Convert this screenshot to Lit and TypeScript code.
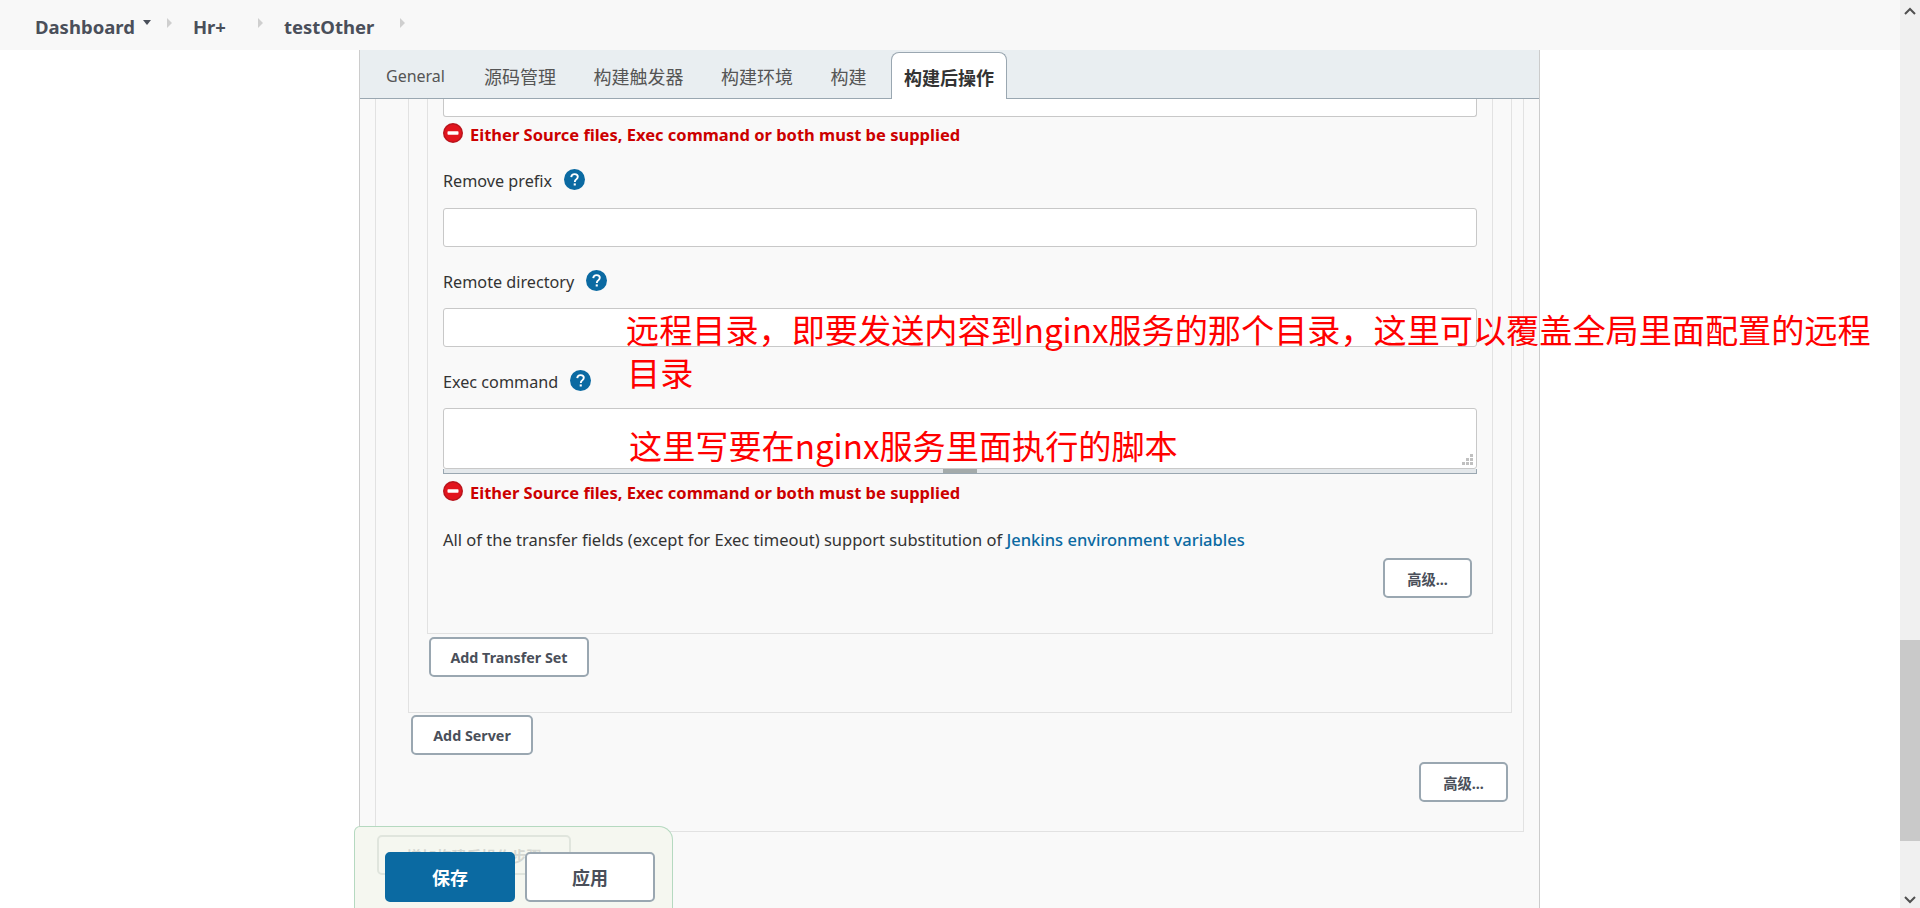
import { LitElement, html, css } from 'lit';
import { customElement } from 'lit/decorators.js';

const ERROR_TEXT = 'Either Source files, Exec command or both must be supplied';

@customElement('app-root')
export class AppRoot extends LitElement {
  static styles = css`
    :host {
      display: block;
      position: relative;
      width: 1920px;
      height: 908px;
      overflow: hidden;
      background: #fff;
      color: #333;
      font-family: "Noto Sans", "Open Sans", "Noto Sans CJK SC", sans-serif;
      font-size: 16.2px;
    }
    .page {
      display: flex;
      height: 908px;
    }
    .main {
      width: 1900px;
      flex: none;
    }
    .scrollbar {
      position: relative;
      width: 20px;
      background: #f0f0f0;
      display: flex;
      flex-direction: column;
      padding-top: 640px;
      box-sizing: border-box;
    }
    .thumb {
      height: 201px;
      background: #c9c9c9;
    }
    .arrow {
      position: absolute;
      left: 0;
    }
    .arrow.up {
      top: 4px;
    }
    .arrow.down {
      bottom: 0;
    }
    .crumbs {
      height: 50px;
      box-sizing: border-box;
      background: #f8f8f8;
      display: flex;
      align-items: center;
      padding: 3px 0 0 35px;
      color: #4a4f5a;
      font-weight: 700;
      font-size: 18.5px;
    }
    .crumb-caret {
      width: 0;
      height: 0;
      margin: 0 0 8px 8px;
      border: 4px solid transparent;
      border-top: 5px solid #4a4f5a;
      border-bottom: 0;
    }
    .crumb-sep {
      width: 0;
      height: 0;
      border: 5px solid transparent;
      border-left: 5px solid #cfcfcf;
      border-right: 0;
      margin-bottom: 8px;
    }
    .sep-1 { margin-left: 16px; }
    .sep-2 { margin-left: 32px; }
    .sep-3 { margin-left: 26px; }
    .crumb-hr { margin-left: 21px; }
    .crumb-job { margin-left: 21px; }
    .panel {
      margin-left: 359px;
      width: 1179px;
      height: 858px;
      border-left: 1px solid #ccc;
      border-right: 1px solid #ccc;
      background: #f9f9f9;
    }
    .tabs {
      height: 49px;
      box-sizing: border-box;
      display: flex;
      align-items: flex-end;
      background: #e9eef1;
      border-bottom: 1px solid #9aa7b1;
      padding-left: 13px;
    }
    .tab {
      height: 46px;
      box-sizing: border-box;
      padding: 2px 13px 0;
      margin-right: 11.5px;
      display: flex;
      align-items: center;
      color: #555;
      font-size: 18px;
    }
    .tab.latin {
      font-size: 16px;
      margin-right: 13px;
    }
    .tab.active {
      height: 47px;
      margin-bottom: -1px;
      background: #fff;
      border: 1px solid #9aa7b1;
      border-bottom: none;
      border-radius: 8px 8px 0 0;
      padding: 2px 12px 0;
      color: #333;
      font-weight: 700;
    }
    .outer {
      margin-left: 15px;
      width: 1149px;
      box-sizing: border-box;
      height: 733px;
      border: 1px solid #e2e2e2;
      border-top: none;
      padding-left: 32px;
      display: flex;
      flex-direction: column;
    }
    .middle {
      width: 1104px;
      height: 614px;
      flex: none;
      box-sizing: border-box;
      border: 1px solid #e2e2e2;
      border-top: none;
      padding-left: 18px;
    }
    .inner {
      width: 1066px;
      height: 535px;
      box-sizing: border-box;
      border: 1px solid #e2e2e2;
      border-top: none;
      padding: 0 15px;
      display: flex;
      flex-direction: column;
    }
    .input {
      height: 39px;
      margin-top: 15px;
      box-sizing: border-box;
      background: #fff;
      border: 1px solid #c8c8c8;
      border-radius: 3px;
      flex: none;
    }
    .input.stub {
      height: 18px;
      margin-top: 0;
      border-top: none;
      border-radius: 0 0 3px 3px;
    }
    .input.first {
      margin-top: 16px;
    }
    .error {
      display: flex;
      align-items: center;
      gap: 7px;
      height: 20px;
      margin-top: 8px;
      color: #cc0000;
      font-weight: 700;
      font-size: 16.5px;
    }
    .error.first {
      margin-top: 7px;
    }
    .error svg {
      margin-top: -2px;
    }
    .label {
      display: flex;
      align-items: center;
      gap: 11.5px;
      height: 22px;
      line-height: 22px;
      margin-top: 24px;
    }
    .label.first {
      margin-top: 26px;
    }
    .label svg {
      margin-top: -4px;
    }
    .textarea {
      position: relative;
      height: 61px;
      margin-top: 15px;
      box-sizing: border-box;
      background: #fff;
      border: 1px solid #c8c8c8;
      border-radius: 3px;
      flex: none;
    }
    .grip {
      position: absolute;
      right: 3px;
      bottom: 3px;
    }
    .drag {
      height: 5px;
      box-sizing: border-box;
      background: #e4e8eb;
      border: 1px solid #9aa7b1;
      border-width: 0 1px 1px;
      display: flex;
      justify-content: center;
      flex: none;
    }
    .drag i {
      display: block;
      width: 34px;
      height: 4px;
      background: #a3aaaa;
    }
    .note {
      height: 22px;
      line-height: 22px;
      margin-top: 27px;
      font-size: 16.5px;
      white-space: nowrap;
    }
    .note a {
      color: #0b6aa2;
      font-weight: 500;
      text-decoration: none;
    }
    .btn {
      box-sizing: border-box;
      height: 40px;
      display: flex;
      align-items: center;
      justify-content: center;
      background: #fff;
      border: 2px solid #9aa7b1;
      border-radius: 5px;
      color: #4a4f5a;
      font-weight: 700;
      font-size: 14.3px;
      flex: none;
    }
    .adv {
      width: 89px;
    }
    .adv.in-form {
      align-self: flex-end;
      margin: 7px 5px 0 0;
    }
    .add-set {
      width: 160px;
      margin: 3px 0 0 2px;
    }
    .add-server {
      width: 122px;
      margin: 2px 0 0 3px;
    }
    .adv.outer-adv {
      margin: 7px 0 0 1011px;
    }
    .annotation {
      position: absolute;
      color: #ff0000;
      font-size: 33.15px;
      line-height: 43px;
      font-family: "Noto Sans CJK SC", "Noto Sans", sans-serif;
      white-space: nowrap;
    }
    .note-1 { left: 626px; top: 308px; }
    .note-2 { left: 627px; top: 351px; }
    .note-3 { left: 629px; top: 424px; }
    .save-bar {
      position: absolute;
      left: 354px;
      top: 826px;
      width: 319px;
      height: 82px;
      box-sizing: border-box;
      background: #f5f7f0;
      border: 1px solid #b5d9c0;
      border-bottom: none;
      border-radius: 6px 14px 0 0;
      display: flex;
      gap: 10px;
      padding: 25px 0 0 30px;
    }
    .ghost {
      position: absolute;
      left: 22px;
      top: 8px;
      width: 194px;
      height: 40px;
      box-sizing: border-box;
      border: 2px solid #e0e5dd;
      border-radius: 5px;
      color: #d5d8d2;
      font-size: 15px;
      font-weight: 700;
      display: flex;
      align-items: center;
      justify-content: center;
    }
    .save-bar .btn {
      position: relative;
      width: 130px;
      height: 50px;
      font-size: 18px;
    }
    .save-bar .primary {
      background: #0b6aa2;
      border-color: #0b6aa2;
      color: #fff;
    }
  `;

  private help() {
    return html`<svg width="21" height="21" viewBox="0 0 21 21">
      <circle cx="10.5" cy="10.5" r="10.5" fill="#0b6aa2"></circle>
      <path d="M7.2 8.1c.2-1.9 1.5-3 3.4-3 1.9 0 3.2 1.1 3.2 2.7 0 1.3-.7 2-1.7 2.7-.9.6-1.2 1-1.2 2v.4" fill="none" stroke="#fff" stroke-width="1.9"></path>
      <rect x="9.7" y="14.4" width="2.1" height="2.1" fill="#fff"></rect>
    </svg>`;
  }

  private stopIcon() {
    return html`<svg width="20" height="20" viewBox="0 0 20 20">
      <circle cx="10" cy="10" r="10" fill="#b8141c"></circle>
      <circle cx="10" cy="10" r="8.6" fill="#e2141d"></circle>
      <rect x="4.5" y="8.2" width="11" height="3.6" rx="0.8" fill="#fff"></rect>
    </svg>`;
  }

  render() {
    return html`
      <div class="page">
        <div class="main">
          <div class="crumbs">
            <span>Dashboard</span>
            <span class="crumb-caret"></span>
            <span class="crumb-sep sep-1"></span>
            <span class="crumb-hr">Hr+</span>
            <span class="crumb-sep sep-2"></span>
            <span class="crumb-job">testOther</span>
            <span class="crumb-sep sep-3"></span>
          </div>
          <div class="panel">
            <div class="tabs">
              <div class="tab latin">General</div>
              <div class="tab">源码管理</div>
              <div class="tab">构建触发器</div>
              <div class="tab">构建环境</div>
              <div class="tab">构建</div>
              <div class="tab active">构建后操作</div>
            </div>
            <div class="outer">
              <div class="middle">
                <div class="inner">
                  <div class="input stub"></div>
                  <div class="error first">${this.stopIcon()}<span>${ERROR_TEXT}</span></div>
                  <div class="label first">Remove prefix ${this.help()}</div>
                  <div class="input first"></div>
                  <div class="label">Remote directory ${this.help()}</div>
                  <div class="input"></div>
                  <div class="label">Exec command ${this.help()}</div>
                  <div class="textarea">
                    <svg class="grip" width="11" height="11" viewBox="0 0 11 11" fill="#c0c0c0">
                      <rect x="8" y="0" width="3" height="3"></rect>
                      <rect x="4" y="4" width="3" height="3"></rect>
                      <rect x="8" y="4" width="3" height="3"></rect>
                      <rect x="0" y="8" width="3" height="3"></rect>
                      <rect x="4" y="8" width="3" height="3"></rect>
                      <rect x="8" y="8" width="3" height="3"></rect>
                    </svg>
                  </div>
                  <div class="drag"><i></i></div>
                  <div class="error">${this.stopIcon()}<span>${ERROR_TEXT}</span></div>
                  <div class="note">All of the transfer fields (except for Exec timeout) support substitution of <a>Jenkins environment variables</a></div>
                  <div class="btn adv in-form">高级...</div>
                </div>
                <div class="btn add-set">Add Transfer Set</div>
              </div>
              <div class="btn add-server">Add Server</div>
              <div class="btn adv outer-adv">高级...</div>
            </div>
          </div>
        </div>
        <div class="scrollbar">
          <svg class="arrow up" width="20" height="14" viewBox="0 0 20 14">
            <path d="M5 10l5-5 5 5" fill="none" stroke="#505050" stroke-width="2"></path>
          </svg>
          <div class="thumb"></div>
          <svg class="arrow down" width="20" height="14" viewBox="0 0 20 14">
            <path d="M5 3l5 5 5-5" fill="none" stroke="#505050" stroke-width="2"></path>
          </svg>
        </div>
      </div>
      <div class="annotation note-1">远程目录，即要发送内容到nginx服务的那个目录，这里可以覆盖全局里面配置的远程</div>
      <div class="annotation note-2">目录</div>
      <div class="annotation note-3">这里写要在nginx服务里面执行的脚本</div>
      <div class="save-bar">
        <div class="ghost">增加构建后操作步骤</div>
        <div class="btn primary">保存</div>
        <div class="btn">应用</div>
      </div>
    `;
  }
}
